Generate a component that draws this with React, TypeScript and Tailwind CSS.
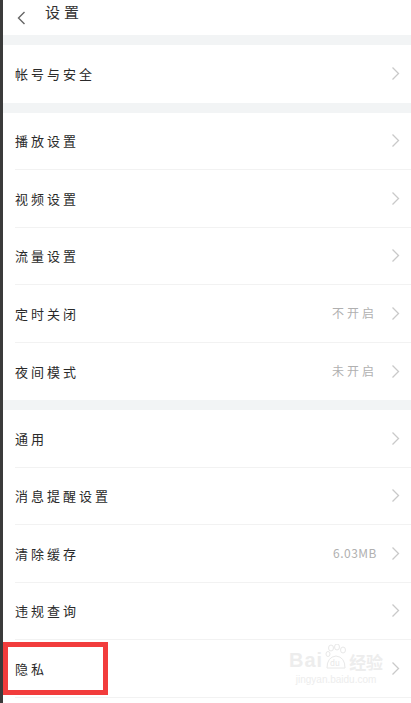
import React from "react";

type Row = { label: string; value?: string };

const sections: Row[][] = [
  [{ label: "帐号与安全" }],
  [
    { label: "播放设置" },
    { label: "视频设置" },
    { label: "流量设置" },
    { label: "定时关闭", value: "不开启" },
    { label: "夜间模式", value: "未开启" },
  ],
  [
    { label: "通用" },
    { label: "消息提醒设置" },
    { label: "清除缓存", value: "6.03MB" },
    { label: "违规查询" },
    { label: "隐私" },
  ],
];

function Chevron() {
  return (
    <svg width="9" height="15" viewBox="0 0 9 15" fill="none">
      <polyline points="1.5,1.5 7.5,7.5 1.5,13.5" stroke="#c9c9c9" strokeWidth="1.3" />
    </svg>
  );
}

function SettingRow({ row, last }: { row: Row; last: boolean }) {
  return (
    <div className={`ml-[12px] h-[57.5px] flex items-center pr-[11px] ${last ? "" : "border-b border-[#f2f2f2]"}`}>
      <span className="flex-1 text-[13px] tracking-[3px] text-[#2a2a2a]">{row.label}</span>
      {row.value && (
        <span className={`text-[12px] text-[#b0b0b0] mr-[14px] ${row.value.includes("MB") ? "tracking-[0.5px]" : "tracking-[3px]"}`}>
          {row.value}
        </span>
      )}
      <Chevron />
    </div>
  );
}

function Watermark() {
  return (
    <div className="absolute left-[289px] top-[644px] flex flex-col items-center text-[#ededed] pointer-events-none">
      <div className="flex items-end gap-[2px]">
        <span className="text-[20px] font-bold leading-none tracking-[1px]" style={{ fontFamily: "Arial, 'Liberation Sans', sans-serif" }}>Bai</span>
        <svg width="22" height="26" viewBox="0 0 22 26" fill="none" stroke="#e8e8e8" strokeWidth="1">
          <ellipse cx="6" cy="4" rx="2.5" ry="3" />
          <ellipse cx="12" cy="3" rx="2.5" ry="3" />
          <ellipse cx="18" cy="6" rx="2.5" ry="3" />
          <ellipse cx="3" cy="10" rx="2" ry="2.5" />
          <path d="M2 24 Q2 13 11 12 Q20 13 20 24 Z" />
          <text x="5" y="22" fontSize="8" fill="#e8e8e8" stroke="none">du</text>
        </svg>
        <span className="text-[17px] font-bold leading-none">经验</span>
      </div>
      <span className="text-[10px] leading-none mt-[5px]" style={{ fontFamily: "Arial, 'Liberation Sans', sans-serif" }}>jingyan.baidu.com</span>
    </div>
  );
}

export default function App() {
  return (
    <div
      className="relative flex w-[411px] h-[703px] overflow-hidden bg-white"
      style={{ fontFamily: "'Noto Sans CJK SC', 'Noto Sans', sans-serif" }}
    >
      <div className="w-[3px] shrink-0 bg-[#3b3b3b]" />
      <div className="flex-1 flex flex-col">
        <div className="h-[35px] flex items-center pl-[14px] gap-[19px]">
          <svg width="9" height="14" viewBox="0 0 9 14" fill="none">
            <polyline points="7.5,1 1.5,7 7.5,13" stroke="#666" strokeWidth="1.4" />
          </svg>
          <span className="text-[15px] tracking-[4px] text-[#333] -mt-[10px]">设置</span>
        </div>
        {sections.map((rows, i) => (
          <div key={i}>
            <div className="h-[10px] bg-[#f2f4f5]" />
            {rows.map((r, j) => (
              <SettingRow key={r.label} row={r} last={j === rows.length - 1 && i !== 2} />
            ))}
          </div>
        ))}
      </div>
      <div className="absolute left-[3px] top-[642px] w-[105px] h-[53px] border-[5px] border-[#f23c3c]" />
      <Watermark />
    </div>
  );
}
